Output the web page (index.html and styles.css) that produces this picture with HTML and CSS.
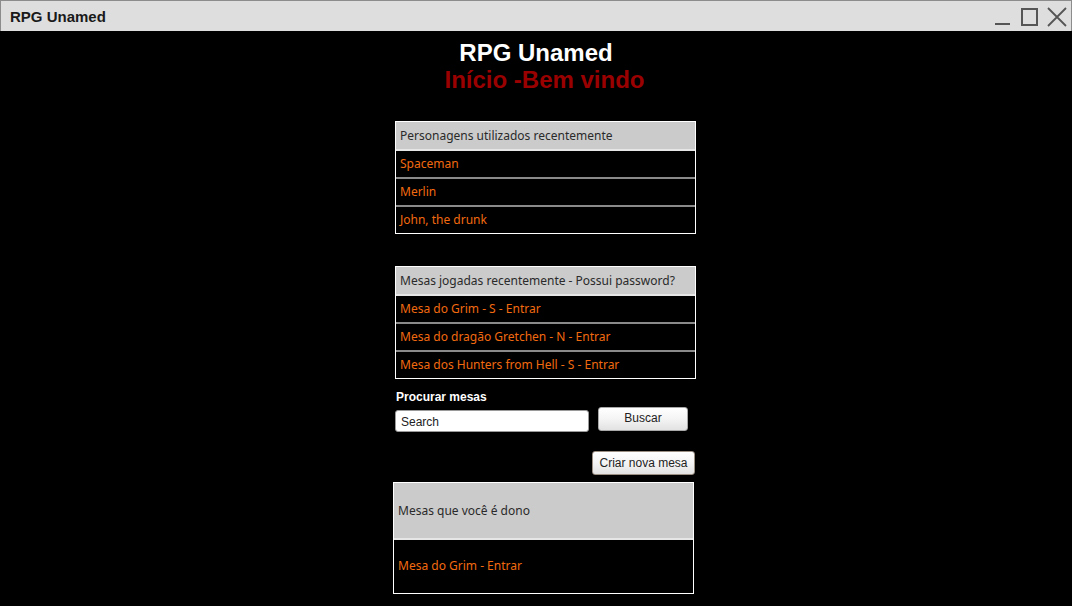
FILE: index.html
```html
<!DOCTYPE html>
<html lang="pt">
<head>
<meta charset="utf-8">
<title>RPG Unamed</title>
<link rel="stylesheet" href="styles.css">
</head>
<body>
<div class="window">
  <header class="titlebar">
    <span class="title">RPG Unamed</span>
    <div class="controls">
      <svg class="ctl" width="20" height="20" viewBox="0 0 20 20"><path d="M3 17H18" stroke="#555" stroke-width="2" fill="none"/></svg>
      <svg class="ctl" width="20" height="20" viewBox="0 0 20 20"><rect x="3" y="2" width="15" height="16" stroke="#555" stroke-width="2" fill="none"/></svg>
      <svg class="ctl" width="22" height="20" viewBox="0 0 22 20"><path d="M2 1L20 19M20 1L2 19" stroke="#555" stroke-width="1.8" fill="none"/></svg>
    </div>
  </header>
  <main class="content">
    <h1 class="app-name">RPG Unamed</h1>
    <h2 class="page-title">Início -Bem vindo</h2>
    <div class="column">
      <section class="list">
        <div class="list-head">Personagens utilizados recentemente</div>
        <div class="list-row first">Spaceman</div>
        <div class="list-row">Merlin</div>
        <div class="list-row">John, the drunk</div>
      </section>
      <section class="list list-gap">
        <div class="list-head">Mesas jogadas recentemente - Possui password?</div>
        <div class="list-row first">Mesa do Grim - S - Entrar</div>
        <div class="list-row">Mesa do dragão Gretchen - N - Entrar</div>
        <div class="list-row">Mesa dos Hunters from Hell - S - Entrar</div>
      </section>
      <div class="search-label">Procurar mesas</div>
      <div class="search-row">
        <div class="search-input">Search</div>
        <div class="btn btn-search">Buscar</div>
      </div>
      <div class="create-row">
        <div class="btn btn-create">Criar nova mesa</div>
      </div>
      <section class="list owned">
        <div class="list-head tall">Mesas que você é dono</div>
        <div class="list-row first tall-row">Mesa do Grim - Entrar</div>
      </section>
    </div>
  </main>
</div>
</body>
</html>
```
FILE: styles.css
```css
* { box-sizing: border-box; }
html, body { margin: 0; padding: 0; background: #000; }
.window {
  width: 1072px;
  height: 606px;
  background: #000;
  overflow: hidden;
  font-family: "Liberation Sans", Arial, sans-serif;
}
.titlebar {
  height: 31px;
  background: #dedede;
  border: 1px solid #8c8c8c;
  border-bottom: none;
  display: flex;
  align-items: center;
  justify-content: space-between;
  padding-left: 9px;
  padding-right: 3px;
}
.title {
  font-size: 15px;
  font-weight: bold;
  color: #1a1a1a;
  margin-top: 1px;
}
.controls {
  display: flex;
  align-items: center;
  gap: 7px;
  margin-top: 1px;
}
.ctl { display: block; }
.content {
  display: flex;
  flex-direction: column;
  align-items: center;
  padding-top: 8px;
}
.app-name {
  margin: 0;
  font-size: 24px;
  line-height: 28px;
  font-weight: bold;
  color: #fff;
}
.page-title {
  margin: 0;
  font-size: 24px;
  line-height: 26px;
  font-weight: bold;
  color: #9a0000;
  padding-left: 17px;
}
.column {
  width: 301px;
  margin-left: 19px;
  margin-top: 28px;
  display: flex;
  flex-direction: column;
}
.list {
  border: 1px solid #fff;
  font-family: "Noto Sans", "Open Sans", sans-serif;
  font-size: 12px;
}
.list-gap { margin-top: 32px; }
.list-head {
  height: 27px;
  background: #cbcbcb;
  color: #2a2a2a;
  display: flex;
  align-items: center;
  padding-left: 4px;
}
.list-row {
  height: 28px;
  border-top: 2px solid #8a8a8a;
  background: #000;
  color: #f26a10;
  display: flex;
  align-items: center;
  padding-left: 4px;
  padding-bottom: 1px;
}
.list-row.first { border-top-color: #e6e6e6; }
.search-label {
  margin-top: 11px;
  font-size: 12px;
  line-height: 14px;
  font-weight: bold;
  color: #fff;
  padding-left: 1px;
}
.search-row {
  margin-top: 3px;
  display: flex;
  align-items: flex-start;
  gap: 9px;
}
.search-input {
  margin-top: 3px;
  width: 194px;
  height: 22px;
  background: #fff;
  border: 1px solid #9a9a9a;
  border-radius: 3px;
  font-size: 12px;
  color: #222;
  display: flex;
  align-items: center;
  padding-left: 5px;
  padding-top: 2px;
}
.btn {
  height: 24px;
  border: 1px solid #a8a8a8;
  border-radius: 3px;
  background: linear-gradient(#ffffff, #f4f4f4 50%, #e2e2e2);
  color: #222;
  font-size: 12px;
  display: flex;
  align-items: center;
  justify-content: center;
}
.btn-search { width: 90px; padding-bottom: 2px; }
.create-row {
  margin-top: 19px;
  display: flex;
  justify-content: flex-end;
  padding-right: 1px;
}
.btn-create { width: 103px; border-color: #9b8f84; }
.owned {
  margin-top: 7px;
  margin-left: -2px;
  margin-right: 2px;
}
.list-head.tall { height: 55px; }
.list-row.tall-row { height: 55px; padding-bottom: 3px; }
```
